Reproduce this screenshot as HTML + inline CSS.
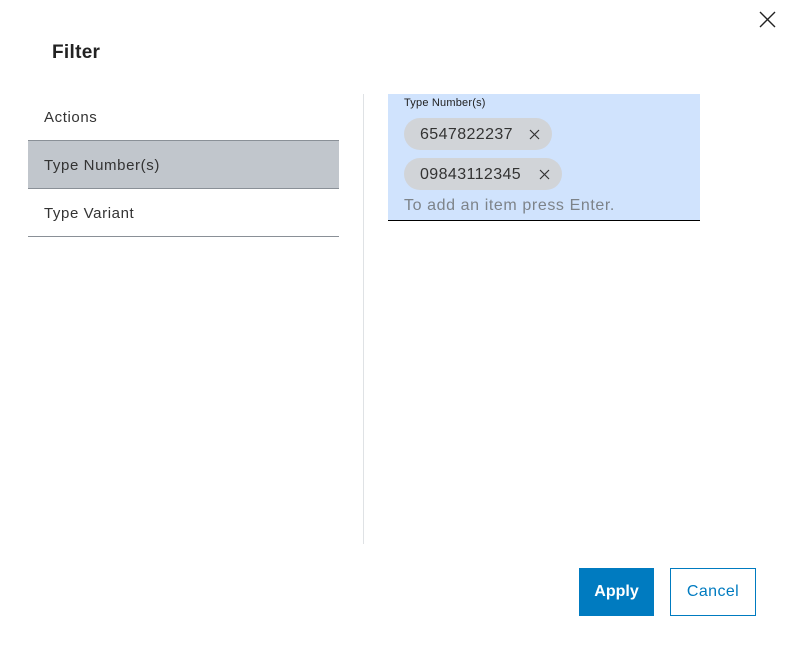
<!DOCTYPE html>
<html><head><style>
*{margin:0;padding:0;box-sizing:border-box}
body{width:795px;height:653px;background:#fff;font-family:"Liberation Sans",sans-serif;position:relative;overflow:hidden;color:#222}
.a{position:absolute}
.item{position:absolute;left:28px;width:311px;height:48px;border-bottom:1px solid #8a9097;font-size:15px;letter-spacing:0.6px;padding-left:16px;line-height:49px;color:#333}
.chip{position:absolute;left:404px;height:32px;border-radius:16px;background:#d1d4d8;font-size:16px;letter-spacing:0.4px;line-height:33px;padding-left:16px;color:#333}
</style></head><body>
<svg class="a" style="left:759px;top:11px" width="17" height="17"><path d="M1 1L16 16M16 1L1 16" stroke="#222" stroke-width="1.4"/></svg>
<div class="a" style="left:52px;top:42px;font-size:19px;font-weight:bold;color:#222;letter-spacing:0.3px">Filter</div>
<div class="item" style="top:93px">Actions</div>
<div class="item" style="top:141px;background:#c1c6cc">Type Number(s)</div>
<div class="item" style="top:189px">Type Variant</div>
<div class="a" style="left:363px;top:94px;width:1px;height:450px;background:#dfe2e5"></div>
<div class="a" style="left:388px;top:94px;width:312px;height:127px;background:#d0e3fd;border-bottom:1px solid #000"></div>
<div class="a" style="left:404px;top:97px;font-size:11px;color:#222;letter-spacing:0.2px">Type Number(s)</div>
<div class="chip" style="top:118px;width:148px">6547822237<svg class="a" style="left:125px;top:11px" width="11" height="11"><path d="M1 1L10 10M10 1L1 10" stroke="#333" stroke-width="1.2"/></svg></div>
<div class="chip" style="top:158px;width:158px">09843112345<svg class="a" style="left:135px;top:11px" width="11" height="11"><path d="M1 1L10 10M10 1L1 10" stroke="#333" stroke-width="1.2"/></svg></div>
<div class="a" style="left:404px;top:197px;font-size:16px;letter-spacing:0.6px;color:#7d8389">To add an item press Enter.</div>
<div class="a" style="left:579px;top:568px;width:75px;height:48px;background:#007bc0;color:#fff;font-size:16px;font-weight:bold;text-align:center;line-height:48px">Apply</div>
<div class="a" style="left:670px;top:568px;width:86px;height:48px;border:1px solid #007bc0;color:#007bc0;font-size:16px;letter-spacing:0.4px;text-align:center;line-height:46px">Cancel</div>
</body></html>
